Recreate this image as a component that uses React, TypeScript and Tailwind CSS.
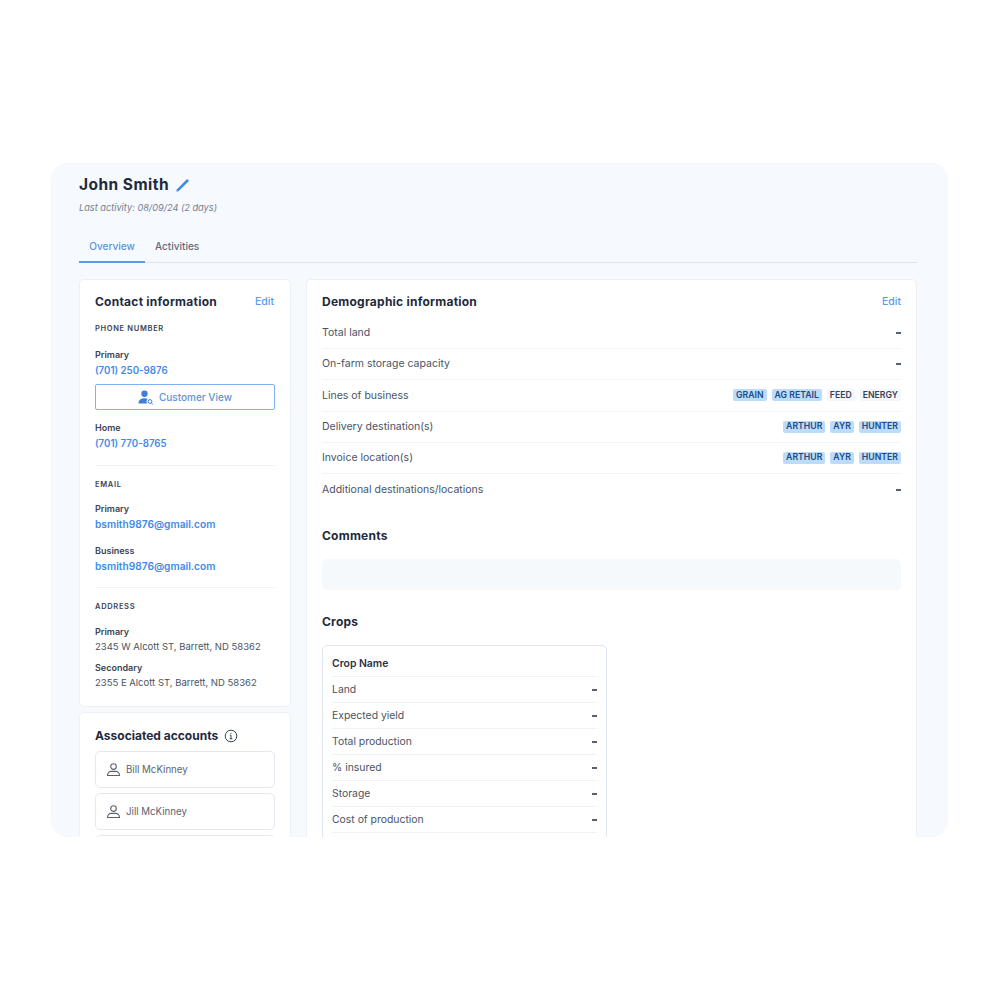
import React from "react";

const Dash = () => <span className="block w-[5px] h-[2px] bg-[#565f70]" />;

const Tag = ({ t, blue }: { t: string; blue?: boolean }) => (
  <span className={`h-[12px] flex items-center px-[3px] rounded-[2px] text-[8.7px] font-semibold leading-none ${blue ? "bg-[#bcdcfb] text-[#1c4a85]" : "bg-[#f3f6fa] text-[#3a4354]"}`}>{t}</span>
);

const Row = ({ label, children, last }: { label: string; children?: React.ReactNode; last?: boolean }) => (
  <div className={`h-[31.2px] flex items-center justify-between text-[10.5px] text-[#4a5364] ${last ? "" : "border-b border-[#f0f3f7]"}`}>
    <span>{label}</span>
    <div className="flex gap-[5px]">{children ?? <Dash />}</div>
  </div>
);

const CropRow = ({ label, bold }: { label: string; bold?: boolean }) => (
  <div className={`h-[26px] shrink-0 flex items-center justify-between border-b border-[#eff2f6] text-[10.4px] ${bold ? "font-semibold text-[#2a3344]" : "text-[#4a5364]"}`}>
    <span>{label}</span>
    {!bold && <Dash />}
  </div>
);

const Lab = ({ t }: { t: string }) => <div className="text-[9px] font-semibold leading-[12px] text-[#3a4354]">{t}</div>;
const Phone = ({ t }: { t: string }) => <div className="text-[9.7px] font-semibold leading-[14px] mt-[3px] text-[#3f8ae6]">{t}</div>;
const Mail = ({ t }: { t: string }) => <div className="text-[10.2px] font-semibold leading-[14px] mt-[2px] text-[#3f8ae6]">{t}</div>;
const Sec = ({ t }: { t: string }) => <div className="text-[7.5px] font-semibold leading-[10px] tracking-[0.09em] text-[#3a4354]">{t}</div>;
const Plain = ({ t }: { t: string }) => <div className="text-[9.5px] leading-[14px] mt-[2px] text-[#4a5364] whitespace-nowrap">{t}</div>;

const H = ({ t, cls = "" }: { t: string; cls?: string }) => <div className={`text-[12px] font-bold tracking-[0.02em] text-[#1f2a3c] leading-[14px] ${cls}`}>{t}</div>;

const Account = ({ name }: { name: string }) => (
  <div className="h-[37px] shrink-0 rounded-[5px] border border-[#e4e9f0] flex items-center pl-[10px] gap-[5px] text-[9.7px] text-[#5a6372]">
    <svg width="15" height="15" viewBox="0 0 16 16" fill="none" stroke="#5a6372" strokeWidth="1.2">
      <circle cx="8" cy="4.8" r="3" />
      <path d="M1.6 14.4c0-2.9 2.2-4.4 4-4.4h4.8c1.8 0 4 1.5 4 4.4z" strokeLinejoin="round" />
    </svg>
    <span className="pt-px">{name}</span>
  </div>
);

export default function App() {
  return (
    <div className="w-[1000px] h-[1000px] bg-white pt-[163px] pl-[51px]" style={{ fontFamily: "Inter, 'Liberation Sans', sans-serif" }}>
      <div className="w-[897px] h-[674px] bg-[#f6f9fd] rounded-[16px] overflow-hidden pl-[28px] pr-[31px] pt-[14px]">
        <div className="flex items-center gap-[7px] h-[16px]">
          <span className="text-[15.5px] font-bold tracking-[0.03em] text-[#1f2a3c] leading-none">John Smith</span>
          <svg width="14" height="14" viewBox="0 0 14 14" fill="#3f8ae6"><path d="M0.3 13.7 1 11.2 10.6 1.6a1 1 0 0 1 1.4 0l.4.4a1 1 0 0 1 0 1.4L2.8 13z" /></svg>
        </div>
        <div className="mt-[8px] text-[9.2px] italic leading-[14px] text-[#767f8d]">Last activity: 08/09/24 (2 days)</div>
        <div className="mt-[16px] flex h-[32px] border-b border-[#dfe5ec] text-[10px] font-medium">
          <div className="w-[66px] h-[32px] border-b-2 border-[#5b9ce8] text-[#5a94de] flex items-center justify-center">Overview</div>
          <div className="ml-[10px] h-[31px] text-[#606978] flex items-center pb-[1px]">Activities</div>
        </div>
        <div className="mt-[16px] flex gap-[15px] items-start">
          <div className="w-[212px] shrink-0 flex flex-col gap-[5px]">
            <div className="h-[428px] bg-white rounded-[5px] border border-[#edf1f6] px-[15px] pt-[15px]">
              <div className="flex items-center justify-between h-[14px]">
                <H t="Contact information" />
                <span className="text-[10.5px] font-medium text-[#5a9ce8] pr-[1px]">Edit</span>
              </div>
              <div className="mt-[15px]"><Sec t="PHONE NUMBER" /></div>
              <div className="mt-[15px]"><Lab t="Primary" /><Phone t="(701) 250-9876" /></div>
              <div className="mt-[6px] h-[26px] rounded-[2px] border border-[#7fb2ee] flex items-center justify-center gap-[5px] text-[10px] font-medium text-[#5a94de]">
                <svg width="16" height="15" viewBox="0 0 16 15" fill="#3f7fd6">
                  <circle cx="6.5" cy="3.7" r="3.2" />
                  <path d="M0.5 13.5c0-3.3 2.5-5.2 6-5.2 1.2 0 2.4.3 3.3.8a3.4 3.4 0 0 0-.6 4.4z" />
                  <circle cx="12" cy="11.5" r="1.9" fill="none" stroke="#3f7fd6" strokeWidth="1" />
                  <path d="m13.4 13 1.4 1.4" stroke="#3f7fd6" strokeWidth="1" />
                </svg>
                Customer View
              </div>
              <div className="mt-[12px]"><Lab t="Home" /><Phone t="(701) 770-8765" /></div>
              <div className="mt-[14px] border-t border-[#eff2f6]" />
              <div className="mt-[14px]"><Sec t="EMAIL" /></div>
              <div className="mt-[13px]"><Lab t="Primary" /><Mail t="bsmith9876@gmail.com" /></div>
              <div className="mt-[14px]"><Lab t="Business" /><Mail t="bsmith9876@gmail.com" /></div>
              <div className="mt-[14px] border-t border-[#eff2f6]" />
              <div className="mt-[14px]"><Sec t="ADDRESS" /></div>
              <div className="mt-[14px]"><Lab t="Primary" /><Plain t="2345 W Alcott ST, Barrett, ND 58362" /></div>
              <div className="mt-[8px]"><Lab t="Secondary" /><Plain t="2355 E Alcott ST, Barrett, ND 58362" /></div>
            </div>
            <div className="h-[200px] bg-white rounded-[5px] border border-[#edf1f6] px-[15px] pt-[16px] flex flex-col">
              <div className="flex items-center gap-[6px] h-[14px]">
                <H t="Associated accounts" cls="tracking-normal text-[11.8px]" />
                <svg width="14" height="14" viewBox="0 0 14 14" fill="none" stroke="#3a4354" strokeWidth="1"><circle cx="7" cy="7" r="5.8" /><path d="M5.8 6.2H7v3.6M5.6 9.8h2.8M7 3.8v1" /></svg>
              </div>
              <div className="mt-[8px] flex flex-col gap-[5px]">
                <Account name="Bill McKinney" />
                <Account name="Jill McKinney" />
                <div className="h-[37px] shrink-0 rounded-[5px] border border-[#e4e9f0]" />
              </div>
            </div>
          </div>
          <div className="w-[611px] h-[600px] bg-white rounded-[5px] border border-[#edf1f6] px-[15px] pt-[15px]">
            <div className="flex items-center justify-between h-[14px]">
              <H t="Demographic information" />
              <span className="text-[10.5px] font-medium text-[#5a9ce8]">Edit</span>
            </div>
            <div className="mt-[9px]">
              <Row label="Total land" />
              <Row label="On-farm storage capacity" />
              <Row label="Lines of business">
                <Tag t="GRAIN" blue /><Tag t="AG RETAIL" blue /><Tag t="FEED" /><Tag t="ENERGY" />
              </Row>
              <Row label="Delivery destination(s)">
                <Tag t="ARTHUR" blue /><Tag t="AYR" blue /><Tag t="HUNTER" blue />
              </Row>
              <Row label="Invoice location(s)">
                <Tag t="ARTHUR" blue /><Tag t="AYR" blue /><Tag t="HUNTER" blue />
              </Row>
              <Row label="Additional destinations/locations" last />
            </div>
            <H t="Comments" cls="mt-[23.5px]" />
            <div className="mt-[16.5px] h-[31px] rounded-[5px] bg-[#f6f9fc]" />
            <H t="Crops" cls="mt-[25px]" />
            <div className="mt-[16px] w-[285px] h-[300px] rounded-[5px] border border-[#dfe5ec] px-[9px] pt-[5px] flex flex-col">
              <CropRow label="Crop Name" bold />
              <CropRow label="Land" />
              <CropRow label="Expected yield" />
              <CropRow label="Total production" />
              <CropRow label="% insured" />
              <CropRow label="Storage" />
              <CropRow label="Cost of production" />
            </div>
          </div>
        </div>
      </div>
    </div>
  );
}
